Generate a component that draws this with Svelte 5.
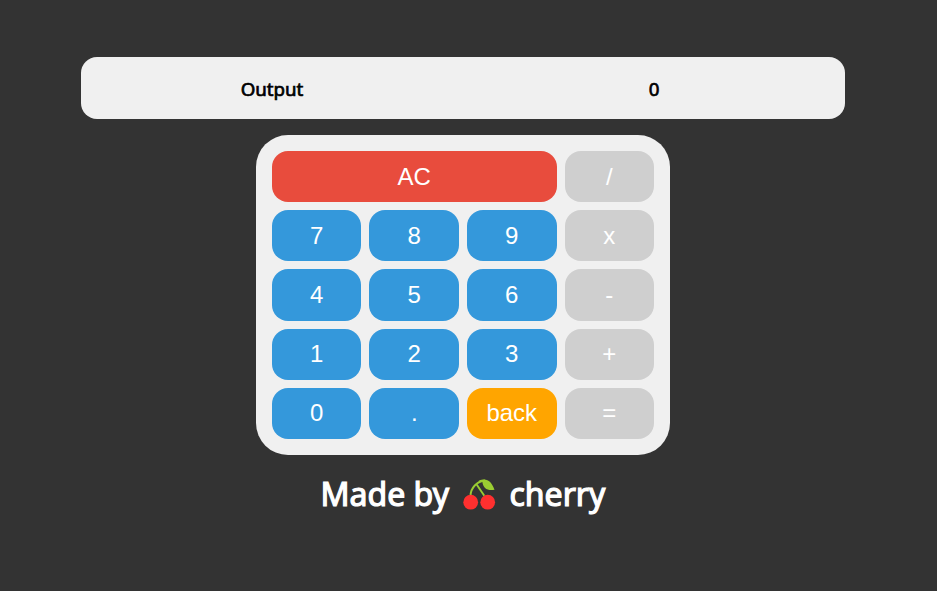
<script>
  const keys = [
    { label: 'AC', kind: 'clear' }, { label: '/', kind: 'op' },
    { label: '7' }, { label: '8' }, { label: '9' }, { label: 'x', kind: 'op' },
    { label: '4' }, { label: '5' }, { label: '6' }, { label: '-', kind: 'op' },
    { label: '1' }, { label: '2' }, { label: '3' }, { label: '+', kind: 'op' },
    { label: '0' }, { label: '.' }, { label: 'back', kind: 'back' }, { label: '=', kind: 'op' }
  ];
  let display = $state('0');

  function press(key) {
    if (key === 'AC') display = '0';
    else if (key === 'back') display = display.slice(0, -1) || '0';
    else if (key === '=') display = evaluate(display);
    else display = display === '0' && /\d/.test(key) ? key : display + key;
  }

  function evaluate(text) {
    const parts = text.match(/\d*\.?\d+|[-+x/]/g) ?? ['0'];
    const terms = [Number(parts[0])];
    for (let i = 1; i < parts.length; i += 2) {
      const value = Number(parts[i + 1]);
      if (parts[i] === 'x') terms.push(terms.pop() * value);
      else if (parts[i] === '/') terms.push(terms.pop() / value);
      else terms.push(parts[i] === '-' ? -value : value);
    }
    return String(terms.reduce((a, b) => a + b, 0));
  }
</script>

<main>
  <section class="output">
    <h3>Output</h3>
    <h3>{display}</h3>
  </section>
  <section class="keypad">
    {#each keys as key}
      <button class={key.kind ?? 'digit'} onclick={() => press(key.label)}>{key.label}</button>
    {/each}
  </section>
  <h1>
    <span>Made by</span>
    <svg class="cherry" width="34" height="34" viewBox="0 0 34 34" aria-hidden="true">
      <path d="M8.500 18C8.500 10 15 3.200 23 2.500" fill="none" stroke="#9acd32" stroke-width="1.900" />
      <path d="M14.500 6.300L22.300 17.800" fill="none" stroke="#9acd32" stroke-width="1.900" />
      <path d="M16.500 2.600C25 -.3 29 2.500 32.500 11.800C25.500 13 21 10.500 20.300 3.500Z" fill="#9acd32" />
      <circle cx="8.700" cy="24.200" r="7.400" fill="#ff302f" />
      <circle cx="25.700" cy="24.200" r="7.400" fill="#ff302f" />
    </svg>
    <span>cherry</span>
  </h1>
</main>

<style>
  :global(body) { background: #333; }
  main {
    box-sizing: border-box;
    width: 926px;
    min-height: 591px;
    padding-top: 57px;
    display: flex;
    flex-direction: column;
    align-items: center;
    font-family: "Noto Sans", "Open Sans", sans-serif;
  }
  .output {
    width: 764px;
    height: 62px;
    display: grid;
    grid-template-columns: 1fr 1fr;
    align-items: center;
    border-radius: 16px;
    background: #f0f0f0;
    text-align: center;
  }
  h3 {
    margin: 2px 0 0;
    font-size: 18.720px;
    line-height: 26px;
    font-weight: 400;
    color: #000;
    -webkit-text-stroke: 0.7px #000;
  }
  .keypad {
    box-sizing: border-box;
    width: 414.120px;
    height: 320px;
    margin-top: 16px;
    padding: 16px;
    display: grid;
    grid-template-columns: repeat(4, 1fr);
    grid-template-rows: repeat(5, 1fr);
    gap: 8px;
    border-radius: 32px;
    background: #f0f0f0;
  }
  button {
    min-width: 0;
    padding: 0;
    border: 0;
    border-radius: 16px;
    color: #fff;
    font: 24px "Liberation Sans", Arial, sans-serif;
    cursor: pointer;
  }
  .digit { background: #3498db; }
  .clear { grid-column: span 3; background: #e84c3d; }
  .op { background: #cfcfcf; }
  .back { background: orange; }
  h1 {
    margin: 17px 0 0;
    display: flex;
    align-items: center;
    font-size: 32px;
    line-height: 44px;
    font-weight: 400;
    color: #fff;
    -webkit-text-stroke: 1.200px #fff;
  }
  .cherry { margin: 2px 13.500px 0 13px; }
</style>
